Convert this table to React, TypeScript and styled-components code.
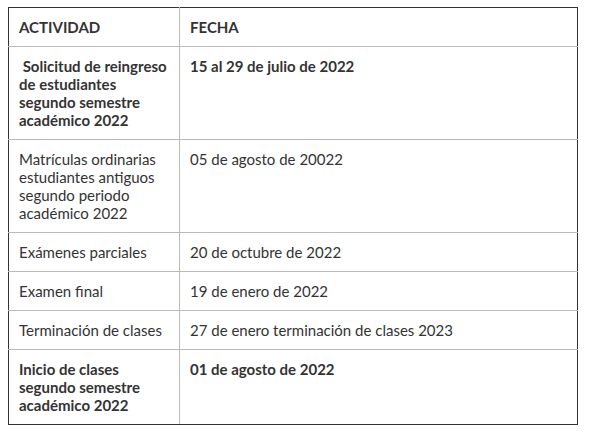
import React from "react";
import styled, { createGlobalStyle } from "styled-components";

const GlobalStyle = createGlobalStyle`
  body {
    margin: 7px 8px;
    background: #fff;
    font-family: Lato, "Noto Sans", sans-serif;
    color: #333;
  }
`;

const Table = styled.table`
  width: 570px;
  border-collapse: collapse;
  font-size: 15px;
  line-height: 18px;

  thead th {
    border-top-color: #333;
  }
  tbody tr:last-child td {
    border-bottom-color: #333;
  }
`;

const Cell = styled.td<{ $bold?: boolean; $first?: boolean }>`
  vertical-align: top;
  padding: 10px 10px;
  border: 1px solid #bbb;
  font-weight: ${(p) => (p.$bold ? 700 : 400)};
  width: ${(p) => (p.$first ? "150px" : "auto")};
  white-space: pre-wrap;

  &:first-child {
    border-left-color: #333;
  }
  &:last-child {
    border-right-color: #333;
  }
`;

const HeadCell = styled(Cell).attrs({ as: "th" })`
  text-align: left;
  font-weight: 700;
`;

type Row = {
  activity: string;
  date: string;
  bold?: boolean;
};

const rows: Row[] = [
  {
    activity: " Solicitud de reingreso de estudiantes segundo semestre académico 2022",
    date: "15 al 29 de julio de 2022",
    bold: true,
  },
  {
    activity: "Matrículas ordinarias estudiantes antiguos segundo periodo académico 2022",
    date: "05 de agosto de 20022",
  },
  { activity: "Exámenes parciales", date: "20 de octubre de 2022" },
  { activity: "Examen final", date: "19 de enero de 2022" },
  { activity: "Terminación de clases", date: "27 de enero terminación de clases 2023" },
  {
    activity: "Inicio de clases segundo semestre académico 2022",
    date: "01 de agosto de 2022",
    bold: true,
  },
];

function App() {
  return (
    <>
      <GlobalStyle />
      <Table>
        <thead>
          <tr>
            <HeadCell $first>ACTIVIDAD</HeadCell>
            <HeadCell>FECHA</HeadCell>
          </tr>
        </thead>
        <tbody>
          {rows.map((r) => (
            <tr key={r.activity}>
              <Cell $first $bold={r.bold}>
                {r.activity}
              </Cell>
              <Cell $bold={r.bold}>{r.date}</Cell>
            </tr>
          ))}
        </tbody>
      </Table>
    </>
  );
}

export default App;
